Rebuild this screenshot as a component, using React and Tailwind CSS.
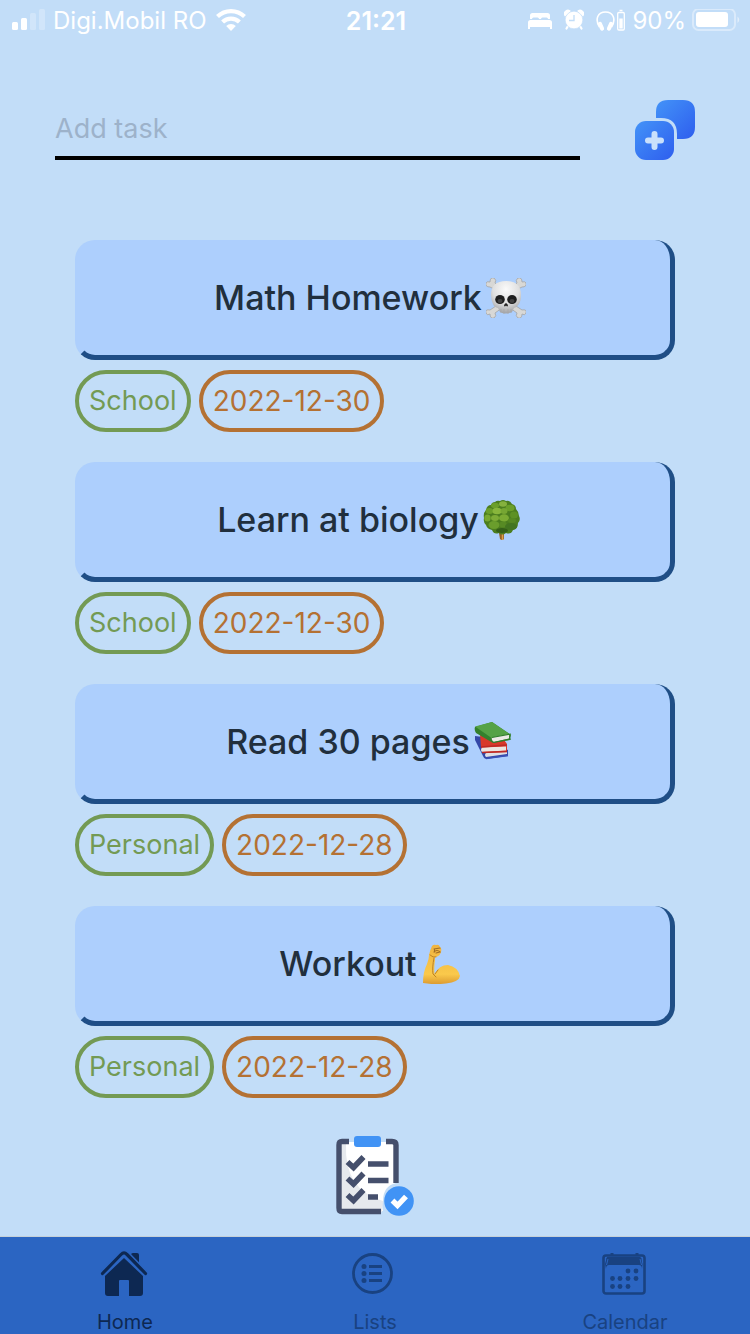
import { useState } from "react";

function Signal() {
  return (
    <svg className="h-6 w-[33px] shrink-0" viewBox="0 0 33 24" fill="#fff" aria-hidden="true">
      <rect x="0" y="13" width="6" height="8" rx="1.5" />
      <rect x="9" y="9" width="6" height="12" rx="1.5" />
      <rect x="18" y="4" width="6" height="17" rx="1.5" opacity="0.25" />
      <rect x="27" y="0" width="6" height="21" rx="1.5" opacity="0.25" />
    </svg>
  );
}

function Wifi() {
  return (
    <svg className="h-6 w-8 shrink-0" viewBox="0 0 32 24" fill="none" stroke="#fff" strokeWidth="4.2" aria-hidden="true">
      <path d="M2.5 7.6a19.4 19.4 0 0 1 27 0" />
      <path d="M7.6 13a12 12 0 0 1 16.8 0" />
      <path d="M11.2 17a6.800 6.800 0 0 1 9.600 0L16 22z" fill="#fff" stroke="none" />
    </svg>
  );
}

function Bed() {
  return (
    <svg className="h-6 w-6 shrink-0" viewBox="0 0 24 24" fill="#fff" aria-hidden="true">
      <path d="M2 10V6.500q0-2.500 2.500-2.500h15q2.500 0 2.500 2.500V10h-2q0-1.500-1.500-1.500H14.500q-1.500 0-1.500 1.500h-2q0-1.500-1.500-1.500h-4Q4 8.500 4 10z" />
      <path d="M0 13.500q0-2.500 2.500-2.500h19q2.500 0 2.500 2.500V20h-2v-2H2v2H0z" />
    </svg>
  );
}

function Alarm() {
  return (
    <svg className="h-6 w-5 shrink-0" viewBox="0 0 20 24" aria-hidden="true">
      <path d="M1 7.500a4 4 0 0 1 6-5.500zM19 7.500A4 4 0 0 0 13 2z" fill="#fff" />
      <path d="M4 17l-1.500 2.500M16 17l1.500 2.500" stroke="#fff" strokeWidth="2.200" strokeLinecap="round" />
      <circle cx="10" cy="11" r="8.800" fill="#fff" stroke="#c2ddf8" strokeWidth="0.600" />
      <path d="M10 6v5.500H5" fill="none" stroke="#c2ddf8" strokeWidth="1.300" />
    </svg>
  );
}

function Headphones() {
  return (
    <svg className="h-6 w-[30px] shrink-0" viewBox="0 0 30 24" fill="none" stroke="#fff" aria-hidden="true">
      <path d="M3.500 18C-1.500 10 2 3 9.500 3S20.500 10 15.500 18" strokeWidth="1.600" />
      <path d="M4 15l2 4.500M15 15l-2 4.500" strokeWidth="4.200" strokeLinecap="round" />
      <rect x="21.700" y="3.500" width="6.600" height="17.500" rx="1.200" strokeWidth="1.300" />
      <path d="M23.500 1.500h3" strokeWidth="1.500" />
      <rect x="23.300" y="9.500" width="3.400" height="10" fill="#fff" stroke="none" />
    </svg>
  );
}

function Battery() {
  return (
    <svg className="h-6 w-12 shrink-0" viewBox="0 0 48 24" aria-hidden="true">
      <rect x="1" y="0" width="42" height="21" rx="5.500" fill="none" stroke="#fff" strokeOpacity="0.4" strokeWidth="2" />
      <rect x="4" y="3" width="32" height="15" rx="3" fill="#fff" />
      <path d="M45.500 7.500q3.500 3 0 6.500z" fill="#fff" fillOpacity="0.5" />
    </svg>
  );
}

function AddIcon() {
  return (
    <svg className="size-[60px]" viewBox="0 0 60 60" aria-hidden="true">
      <defs>
        <linearGradient id="add-blue" x1="0" y1="0" x2="1" y2="1">
          <stop offset="0" stopColor="#4393f8" />
          <stop offset="1" stopColor="#2e5eee" />
        </linearGradient>
      </defs>
      <path d="M21 18V12Q21 0 33 0h15q12 0 12 12v15q0 12-12 12h-6v-5Q42 18 26 18z" fill="url(#add-blue)" />
      <rect x="0" y="21" width="39" height="39" rx="11" fill="url(#add-blue)" />
      <path d="M19.500 34v13M13 40.500h13" stroke="#c9e0fb" strokeWidth="6" strokeLinecap="round" />
    </svg>
  );
}

function Skull() {
  return (
    <svg className="size-10 shrink-0" viewBox="0 0 40 40" role="img" aria-label="skull and crossbones">
      <defs>
        <radialGradient id="bone" cx="0.5" cy="0.25" r="0.8">
          <stop offset="0" stopColor="#fafafa" />
          <stop offset="0.55" stopColor="#dfdfdf" />
          <stop offset="1" stopColor="#97999c" />
        </radialGradient>
      </defs>
      <g fill="#d8d8d6" stroke="#a5a5a4" strokeWidth="0.8">
        <path d="M10 12L4 9Q-1 9 0 5q1-2 4-1Q4-1 8 0q3 2 1 5l5 5zM30 12l6-3q5 0 4-4-1-2-4-1 0-5-4-4-3 2-1 5l-5 5z" />
        <path d="M10 28l-6 4q-5-1-4 3 1 3 4 1 0 5 4 4 3-2 1-5l7-5zM30 28l6 4q5-1 4 3-1 3-4 1 0 5-4 4-3-2-1-5l-7-5z" />
      </g>
      <path d="M5 17Q5 3 20 3t15 14q0 6-2 9-2 3-5 4l-2 4q-6 3-12 0l-2-4q-4-1-5-4-2-4-2-9z" fill="url(#bone)" />
      <path d="M15 31v4M18 31v5M22 31v5M25 31v4" stroke="#a7a7a7" strokeWidth="0.8" />
      <ellipse cx="14" cy="21.500" rx="4.800" ry="4.500" fill="#1e1e1e" />
      <ellipse cx="26" cy="21.500" rx="4.800" ry="4.500" fill="#1e1e1e" />
      <ellipse cx="14" cy="23" rx="2.500" ry="2" fill="#424242" />
      <ellipse cx="26" cy="23" rx="2.500" ry="2" fill="#424242" />
      <path d="M18 28q0-2 2-3 2 1 2 3l-1 .5-1-1-1 1z" fill="#222" />
    </svg>
  );
}

function Tree() {
  return (
    <svg className="size-10 shrink-0" viewBox="0 0 40 40" role="img" aria-label="tree">
      <path d="M16 33h5v6q-2 2-4 0z" fill="#936126" />
      <path d="M19.500 34v6" stroke="#dca04c" strokeWidth="1.500" />
      <path d="M12 2Q14 0 17 1q3-2 6 0 4-1 6 3 4 1 4 5 3 3 3 7 2 4-1 7 0 6-5 7-2 5-7 3-4 3-7 0-5 2-7-3-5-1-6-5-3-3-2-7-1-5 2-8 1-5 5-5 1-3 4-3z" fill="#4c7e1f" />
      <g fill="#6b9f2a">
        <ellipse cx="12" cy="5.500" rx="4" ry="2.700" />
        <ellipse cx="20" cy="4" rx="4" ry="2.700" fill="#85b13e" />
        <ellipse cx="27" cy="8" rx="4.500" ry="3.300" />
        <ellipse cx="6.500" cy="11" rx="3.800" ry="3" />
        <ellipse cx="14" cy="11" rx="4.500" ry="3.300" fill="#88b63c" />
        <ellipse cx="21" cy="11" rx="3.500" ry="3" fill="#76a633" />
        <ellipse cx="31" cy="15" rx="4" ry="3.500" fill="#5d9125" />
        <ellipse cx="4.500" cy="18" rx="3.200" ry="3.500" fill="#78a831" />
        <ellipse cx="12" cy="18" rx="4" ry="3" fill="#7dac36" />
        <ellipse cx="21" cy="18" rx="5" ry="3.700" fill="#7bab33" />
        <ellipse cx="29" cy="20.500" rx="4" ry="2.500" fill="#568922" />
        <ellipse cx="11" cy="25" rx="5.500" ry="4" fill="#6a9d2c" />
        <ellipse cx="20" cy="24.500" rx="3.800" ry="3" fill="#578a24" />
        <ellipse cx="28" cy="26.500" rx="6" ry="3.500" fill="#437520" />
        <ellipse cx="19" cy="30.500" rx="6" ry="2.500" fill="#355f19" />
      </g>
    </svg>
  );
}

function Books() {
  return (
    <svg className="size-10 shrink-0" viewBox="0 0 40 40" role="img" aria-label="books">
      <path d="M1 14l8 1 25 13v6L12 37q-2 0-3-3L1 18z" fill="#3448a8" />
      <path d="M12 31l21-3v4l-21 3q-2-2 0-4z" fill="#dedfe5" />
      <path d="M12 36.500l22-3" stroke="#3b50b6" strokeWidth="1.500" />
      <path d="M6 12l22 3 5 7v8l-21 1-5-6z" fill="#d8392a" />
      <path d="M8 25.500l24-1v4l-24 1.500q-2-2 0-4.500z" fill="#ece5e0" />
      <path d="M7 25l26-2M8 30.500l25-1" stroke="#bd2a26" strokeWidth="1.500" />
      <path d="M1 5L18 0l19 13-1 5-17 3L2 11q-2-3-1-6z" fill="#34802d" />
      <path d="M1 4.500L18 0l19 13-18 4z" fill="#55a246" />
      <path d="M18 15.500l17-3.500v4.500l-15 3.500q-3-2-2-4.500z" fill="#ece9e5" />
      <path d="M18 15.500l19-3.500M19 20.500l18-3.500" stroke="#317d2d" strokeWidth="1.200" />
    </svg>
  );
}

function Biceps() {
  return (
    <svg className="size-10 shrink-0" viewBox="0 0 40 40" role="img" aria-label="flexed biceps">
      <defs>
        <linearGradient id="skin" x1="0" y1="0" x2="0" y2="1">
          <stop offset="0" stopColor="#f0b440" />
          <stop offset="0.75" stopColor="#fac94b" />
          <stop offset="1" stopColor="#dc9b31" />
        </linearGradient>
      </defs>
      <path d="M11 2q2-2 4-1 3-1 4 2 2 1 1 5-1 4-5 5-2 0-1 3-1 7-.5 14Q18 21 27 21q10 2 12 11-1 6-14 7.500-12 1.500-23-.5 0-11 4-19 2-5 2-9 1-5 3-9z" fill="url(#skin)" />
      <path d="M13 14q-2 10-1 16l3 3M14 30l3-4M9 11q3 3 6 2" fill="none" stroke="#bd8226" strokeWidth="1" strokeLinecap="round" />
      <path d="M13 5l6-1M13 8q3-3 6 0l-4 1M13.500 5v3" fill="none" stroke="#a06c24" strokeWidth="1.100" strokeLinecap="round" />
    </svg>
  );
}

function ClipboardIcon() {
  return (
    <svg className="size-20" viewBox="0 0 80 80" aria-hidden="true">
      <path d="M4 6h57v41q-13 3-13 18-2 0 0 10H4z" fill="#fff" />
      <path d="M4 8h7q-2 46 37 57l-1 11H7l-3-4z" fill="#e6e9ed" />
      <path d="M14 5.500H7Q4 5.500 4 9v63q0 3.500 3 3.500h39M51 5.500h6q4 0 4 3.500v38" fill="none" stroke="#454f6c" strokeWidth="5.400" />
      <rect x="19" y="0" width="27" height="11" rx="3" fill="#4193f5" />
      <path d="M12.500 26l6 5.500L28.500 21M12.500 42.500l6 5.500L28.500 37.500M12.500 59l6 5.500L28.500 54" fill="none" stroke="#454f6c" strokeWidth="5.600" />
      <path d="M33 28h20.500M33 44.500h20.500M33 61h10" stroke="#454f6c" strokeWidth="5.500" />
      <circle cx="64" cy="65" r="14.800" fill="#4193f5" />
      <path d="M57.500 64.500l5 5 8.500-9" fill="none" stroke="#fff" strokeWidth="5.400" />
    </svg>
  );
}

function HomeIcon() {
  return (
    <svg className="h-[50px] w-[50px]" viewBox="0 0 50 50" fill="#0d2852" aria-hidden="true">
      <path d="M31 12V6q0-2 2-2h4q2 0 2 2v15z" />
      <path d="M2.500 25L21 6q3-3 6 0l18.500 19" fill="none" stroke="#2b65c2" strokeWidth="7" />
      <path d="M2.500 24.500L21 5.500q3-3 6 0l18.500 19" fill="none" stroke="#0d2852" strokeWidth="3.200" strokeLinecap="round" />
      <path d="M5 27L24 9l19 18v17q0 3-3 3H29V32q0-1-1-1h-8q-1 0-1 1v15H8q-3 0-3-3z" />
    </svg>
  );
}

function ListsIcon() {
  return (
    <svg className="h-[50px] w-[50px]" viewBox="0 0 50 50" fill="#194281" stroke="#194281" aria-hidden="true">
      <circle cx="22.500" cy="24.500" r="19" fill="none" strokeWidth="2.800" />
      <g stroke="none">
        <circle cx="14" cy="17.500" r="2.500" />
        <circle cx="14" cy="24.500" r="2.500" />
        <circle cx="14" cy="31.500" r="2.500" />
      </g>
      <path d="M19 17.500h13M19 24.500h13M19 31.500h13" strokeWidth="3" />
    </svg>
  );
}

function CalendarIcon() {
  const dots = [
    [28, 22], [36, 22],
    [12.5, 29.5], [20, 29.5], [28, 29.5], [36, 29.5],
    [12.5, 37.5], [20, 37.5], [28, 37.5],
  ];
  return (
    <svg className="h-[50px] w-[50px]" viewBox="0 0 50 50" fill="#194281" aria-hidden="true">
      <rect x="3.500" y="6.500" width="41" height="38" rx="2.500" fill="none" stroke="#194281" strokeWidth="2.600" />
      <path d="M10.500 6V4h3v2M35.500 6V4h3v2" />
      <path d="M6.500 16V9h35v7H8q-1 0-1.500 0z" />
      <path d="M6 20q0-4 3-4h30q3 0 3 4l.5-5-2-7H7l-2 7z" />
      <path d="M6.500 16l1.500-6M41.500 16L40 10" stroke="#2b65c2" strokeWidth="1" />
      {dots.map(([x, y]) => (
        <circle key={`${x}-${y}`} cx={x} cy={y} r="2.400" />
      ))}
    </svg>
  );
}

const tasks = [
  { title: "Math Homework", Emoji: Skull, list: "School", date: "2022-12-30" },
  { title: "Learn at biology", Emoji: Tree, list: "School", date: "2022-12-30" },
  { title: "Read 30 pages", Emoji: Books, list: "Personal", date: "2022-12-28" },
  { title: "Workout", Emoji: Biceps, list: "Personal", date: "2022-12-28" },
];

function StatusBar() {
  return (
    <header className="grid h-[42px] grid-cols-[1fr_auto_1fr] items-center pr-2.5 pl-3 text-2xl leading-10 text-white">
      <div className="flex items-center gap-2 whitespace-nowrap">
        <Signal />
        <span>Digi.Mobil RO</span>
        <Wifi />
      </div>
      <time className="text-[25px] font-semibold">21:21</time>
      <div className="flex items-center justify-end gap-3 whitespace-nowrap">
        <Bed />
        <Alarm />
        <div className="flex items-center gap-1.5">
          <Headphones />
          <span>90%</span>
          <Battery />
        </div>
      </div>
    </header>
  );
}

function Task({ title, Emoji, list, date }) {
  return (
    <li className="flex flex-col gap-2.5">
      <button
        type="button"
        className="flex h-[120px] w-full items-center justify-center gap-1 rounded-[20px] border-r-5 border-b-5 border-l-5 border-[#1f4e86] border-l-transparent bg-[#adcffd] pr-2.5 text-[34px] font-medium text-[#212f3d]"
      >
        <span>{title}</span>
        <Emoji />
      </button>
      <div className="flex gap-2 leading-[54px]">
        <span className="rounded-full border-4 border-[#739a54] px-2.5 text-[27px] text-[#739a54]">{list}</span>
        <span className="rounded-full border-4 border-[#b47133] px-2.5 text-[28px] text-[#b47133]">{date}</span>
      </div>
    </li>
  );
}

function Tab({ href, label, active, children }) {
  return (
    <a
      href={href}
      aria-current={active ? "page" : undefined}
      className={`flex flex-1 flex-col items-center justify-between pt-3 text-xl leading-6 ${active ? "text-[#0d2852]" : "text-[#194281]"}`}
    >
      {children}
      <span>{label}</span>
    </a>
  );
}

export default function App() {
  const [draft, setDraft] = useState("");
  return (
    <div className="flex min-h-screen flex-col bg-[#c2ddf8] font-['Inter','Liberation_Sans',sans-serif]">
      <StatusBar />
      <main className="flex flex-1 flex-col">
        <form className="flex items-center gap-[55px] px-[55px] pt-[58px]" onSubmit={(e) => e.preventDefault()}>
          <input
            type="text"
            aria-label="Add task"
            placeholder="Add task"
            value={draft}
            onChange={(e) => setDraft(e.target.value)}
            className="h-[60px] min-w-0 flex-1 rounded-none border-b-4 border-black bg-transparent text-[27px] text-[#212f3d] outline-none placeholder:text-[#9db2ca]"
          />
          <button type="submit" aria-label="Add" className="shrink-0">
            <AddIcon />
          </button>
        </form>
        <ul className="flex flex-col gap-[30px] px-[75px] pt-20">
          {tasks.map((task) => (
            <Task key={task.title} {...task} />
          ))}
        </ul>
        <button type="button" aria-label="Completed tasks" className="mt-[38px] mb-5 self-center">
          <ClipboardIcon />
        </button>
      </main>
      <nav className="flex h-[98px] border-t border-[#c5d0d8] bg-[#2b65c2]">
        <Tab href="#home" label="Home" active>
          <HomeIcon />
        </Tab>
        <Tab href="#lists" label="Lists">
          <ListsIcon />
        </Tab>
        <Tab href="#calendar" label="Calendar">
          <CalendarIcon />
        </Tab>
      </nav>
    </div>
  );
}
